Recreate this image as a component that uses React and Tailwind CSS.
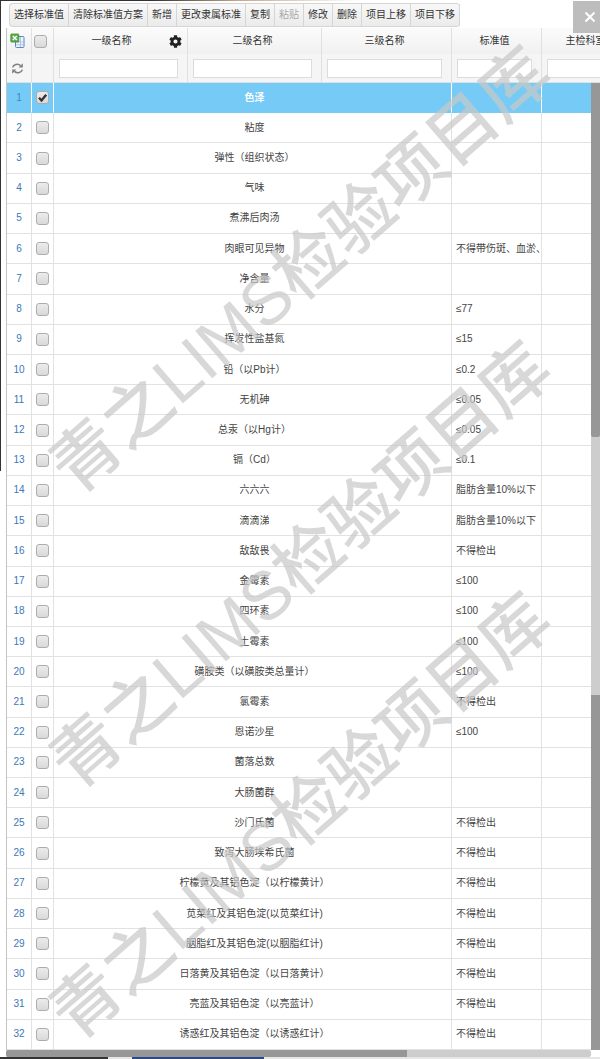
import { useState } from "react";
import { FaCog } from "react-icons/fa";
import clsx from "clsx";

const ACTIONS = [
  { label: "选择标准值" },
  { label: "清除标准值方案" },
  { label: "新增" },
  { label: "更改隶属标准" },
  { label: "复制" },
  { label: "粘贴", disabled: true },
  { label: "修改" },
  { label: "删除" },
  { label: "项目上移" },
  { label: "项目下移" },
];

const COLUMNS = ["一级名称", "二级名称", "三级名称", "标准值", "主检科室"];

const ITEMS = [
  { name: "色泽", value: "" },
  { name: "粘度", value: "" },
  { name: "弹性（组织状态）", value: "" },
  { name: "气味", value: "" },
  { name: "煮沸后肉汤", value: "" },
  { name: "肉眼可见异物", value: "不得带伤斑、血淤、" },
  { name: "净含量", value: "" },
  { name: "水分", value: "≤77" },
  { name: "挥发性盐基氮", value: "≤15" },
  { name: "铅（以Pb计）", value: "≤0.2" },
  { name: "无机砷", value: "≤0.05" },
  { name: "总汞（以Hg计）", value: "≤0.05" },
  { name: "镉（Cd）", value: "≤0.1" },
  { name: "六六六", value: "脂肪含量10%以下" },
  { name: "滴滴涕", value: "脂肪含量10%以下" },
  { name: "敌敌畏", value: "不得检出" },
  { name: "金霉素", value: "≤100" },
  { name: "四环素", value: "≤100" },
  { name: "土霉素", value: "≤100" },
  { name: "磺胺类（以磺胺类总量计）", value: "≤100" },
  { name: "氯霉素", value: "不得检出" },
  { name: "恩诺沙星", value: "≤100" },
  { name: "菌落总数", value: "" },
  { name: "大肠菌群", value: "" },
  { name: "沙门氏菌", value: "不得检出" },
  { name: "致泻大肠埃希氏菌", value: "不得检出" },
  { name: "柠檬黄及其铝色淀（以柠檬黄计）", value: "不得检出" },
  { name: "苋菜红及其铝色淀(以苋菜红计)", value: "不得检出" },
  { name: "胭脂红及其铝色淀(以胭脂红计)", value: "不得检出" },
  { name: "日落黄及其铝色淀（以日落黄计）", value: "不得检出" },
  { name: "亮蓝及其铝色淀（以亮蓝计）", value: "不得检出" },
  { name: "诱惑红及其铝色淀（以诱惑红计）", value: "不得检出" },
];

function ExcelIcon() {
  return (
    <svg width="16" height="16" viewBox="0 0 16 16" aria-hidden="true">
      <rect x="5.5" y="3.5" width="8.5" height="11" rx="1" fill="#eef5fd" stroke="#5b87c0" />
      <path d="M6 9h8M6 11.8h8M10.5 4v10" stroke="#9dbbe0" strokeWidth="0.8" />
      <rect x="0.8" y="1" width="8" height="8" rx="0.8" fill="#5fae4a" stroke="#3f8a35" strokeWidth="0.8" />
      <path d="M2.8 3l4 4M6.8 3l-4 4" stroke="#fff" strokeWidth="1.4" />
    </svg>
  );
}

function RefreshIcon() {
  return (
    <svg width="13" height="13" viewBox="0 0 13 13" fill="none" aria-hidden="true">
      <path d="M1.6 5.4C2.4 2.6 6.6 1 9.6 3.6" stroke="#808080" strokeWidth="1.5" />
      <path d="M11.8 1.2v4.2H7.6z" fill="#808080" />
      <path d="M11.4 7.6C10.6 10.4 6.4 12 3.4 9.4" stroke="#808080" strokeWidth="1.5" />
      <path d="M1.2 11.8V7.6h4.2z" fill="#808080" />
    </svg>
  );
}

function Checkbox({ label, checked, onChange }) {
  return (
    <label className="grid justify-items-center items-center">
      <input
        type="checkbox"
        aria-label={label}
        checked={checked}
        onChange={onChange}
        className="col-start-1 row-start-1 size-[13px] appearance-none rounded-[3px] border border-[#adadad] bg-linear-to-b from-[#ececec] to-[#d9d9d9]"
      />
      {checked && (
        <svg viewBox="0 0 13 13" className="pointer-events-none col-start-1 row-start-1 size-[13px]" aria-hidden="true">
          <path d="M3 6.8l2.5 2.7L10.2 3.8" fill="none" stroke="#333" strokeWidth="2.4" />
        </svg>
      )}
    </label>
  );
}

function Toolbar() {
  return (
    <div className="ml-2 flex h-6 w-fit shrink-0 rounded-sm border-y border-l border-[#d5d5d5] bg-linear-to-b from-[#f8f8f8] to-[#ebebeb]">
      {ACTIONS.map((action) => (
        <button
          key={action.label}
          type="button"
          disabled={action.disabled}
          className="border-r border-[#d5d5d5] px-1 whitespace-nowrap text-[#333] disabled:text-[#aaa]"
        >
          {action.label}
        </button>
      ))}
    </div>
  );
}

function ItemRow({ index, item, selected, onToggle }) {
  const cell = clsx(
    "overflow-hidden border-b border-r p-0 whitespace-nowrap",
    selected ? "border-b-[#76cbf6] border-r-white" : "border-[#e2e2e2]"
  );

  return (
    <tr className={selected ? "bg-[#76cbf6] text-white" : "text-[#444]"}>
      <td className={clsx(cell, "text-center", selected ? "text-[#3f86bd]" : "text-[#3a78b8]")}>
        {index + 1}
      </td>
      <td className={cell}>
        <Checkbox label={item.name} checked={selected} onChange={onToggle} />
      </td>
      <td colSpan={3} className={clsx(cell, "pl-1 text-center", selected && "font-bold")}>
        {item.name}
      </td>
      <td className={clsx(cell, "pl-1")}>{item.value}</td>
      <td className={cell} />
    </tr>
  );
}

function Watermark({ className }) {
  return (
    <div
      aria-hidden="true"
      className={clsx(
        "pointer-events-none absolute left-1/2 -translate-x-1/2 -translate-y-1/2 -rotate-41 text-[68px] leading-none font-medium whitespace-nowrap text-[#c8c8c8]/70 select-none",
        className
      )}
    >
      青之LIMS检验项目库
    </div>
  );
}

export default function App() {
  const [selected, setSelected] = useState([0]);

  const toggle = (index) =>
    setSelected((prev) =>
      prev.includes(index) ? prev.filter((i) => i !== index) : [...prev, index]
    );

  const allSelected = selected.length === ITEMS.length;

  return (
    <div className="relative flex h-screen flex-col overflow-hidden bg-white pt-[3px] pl-[6px] font-['Liberation_Sans','Noto_Sans_CJK_SC',sans-serif] text-[10px] leading-4">
      {/* Page edges behind the dialog */}
      <div className="absolute top-0 left-0 h-px w-full bg-linear-to-r from-[#333] from-25% via-[#c9a88c] via-40% to-white to-60%" />
      <div className="absolute top-0 left-0 h-[44.5%] w-px bg-[#333]" />

      <div className="-ml-[6px] pl-px">
        <Toolbar />
      </div>

      {/* Grid */}
      <div className="relative mt-px min-h-0 flex-1 overflow-hidden border-l border-[#c4c4c4]">
        <table className="h-full w-[627px] table-fixed border-separate border-spacing-0">
          <colgroup>
            <col className="w-[25px]" />
            <col className="w-[22px]" />
            <col className="w-[134px]" />
            <col className="w-[134px]" />
            <col className="w-[130px]" />
            <col className="w-[90px]" />
            <col />
          </colgroup>
          <thead className="text-[#333]">
            <tr className="h-[26px] bg-linear-to-b from-[#fbfbfb] to-[#f1f1f1]">
              <th className="h-[26px] border-r border-[#e0e0e0] p-0">
                <button type="button" aria-label="导出Excel" className="block pl-[3px]">
                  <ExcelIcon />
                </button>
              </th>
              <th className="border-r border-[#e0e0e0] p-0 pr-1">
                <Checkbox
                  label="全选"
                  checked={allSelected}
                  onChange={() => setSelected(allSelected ? [] : ITEMS.map((_, i) => i))}
                />
              </th>
              {COLUMNS.map((column, i) => (
                <th key={column} className="border-r border-[#e0e0e0] py-0 pr-1 pl-0 font-normal">
                  <div className="flex items-center">
                    <span className="flex-1 text-center">{column}</span>
                    {i === 0 && (
                      <button type="button" aria-label="列设置" className="pr-px">
                        <FaCog size={13} color="#222" />
                      </button>
                    )}
                  </div>
                </th>
              ))}
            </tr>
            <tr className="h-[29px] bg-[#f5f5f5]">
              <th className="h-[29px] border-r border-b border-[#e0e0e0] p-0">
                <button type="button" aria-label="刷新" className="block pl-1">
                  <RefreshIcon />
                </button>
              </th>
              <th className="border-r border-b border-[#e0e0e0] p-0" />
              {COLUMNS.map((column) => (
                <th key={column} className="border-r border-b border-[#e0e0e0] py-0 pr-[9px] pl-[5px]">
                  <input
                    type="text"
                    aria-label={column}
                    className="block h-[19px] w-full border border-[#dcdcdc] bg-white px-1 font-normal"
                  />
                </th>
              ))}
            </tr>
          </thead>
          <tbody>
            {ITEMS.map((item, i) => (
              <ItemRow
                key={item.name}
                index={i}
                item={item}
                selected={selected.includes(i)}
                onToggle={() => toggle(i)}
              />
            ))}
          </tbody>
        </table>

        {/* Vertical scrollbar */}
        <div className="absolute top-[55px] right-0 bottom-0 flex w-[9px] flex-col bg-[#cdcdcd]">
          <div className="h-[36.6%] rounded-b-xs bg-[#979797]" />
          <div className="mt-auto h-[36.7%] bg-[#979797]" />
        </div>
      </div>

      {/* Horizontal scrollbar */}
      <div className="mr-[9px] h-[7px] shrink-0 rounded-xs bg-[#cdcdcd]">
        <div className="h-full w-[68.6%] rounded-l-xs bg-[#979797]" />
      </div>
      <div className="-ml-[6px] flex h-[2px] shrink-0 bg-[#e6e6e6]">
        <div className="w-[18%] bg-[#333]" />
        <div className="ml-[4%] w-[22%] bg-[#2a4a86]" />
      </div>

      <Watermark className="top-[270px]" />
      <Watermark className="top-[565px]" />
      <Watermark className="top-[816px]" />

      <button
        type="button"
        aria-label="关闭"
        className="absolute top-px right-0 flex h-8 w-[27px] items-center justify-center bg-[#bdbdbd] pl-[7px]"
      >
        <svg width="12" height="12" viewBox="0 0 12 12" aria-hidden="true">
          <path d="M1.5 1.5l9 9M10.5 1.5l-9 9" stroke="#fff" strokeWidth="2" />
        </svg>
      </button>
    </div>
  );
}
